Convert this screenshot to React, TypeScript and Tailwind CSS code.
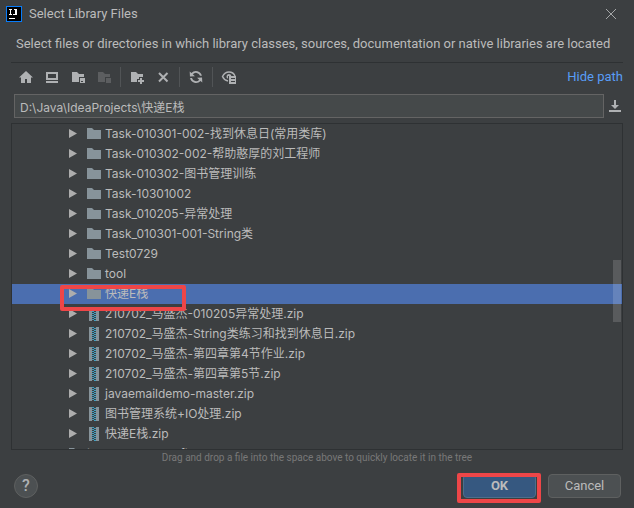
import type { ReactNode } from "react";

type Kind = "folder" | "zip";

interface Entry {
  name: string;
  kind: Kind;
  selected?: boolean;
}

const entries: Entry[] = [
  { name: "Task-010301-002-找到休息日(常用类库)", kind: "folder" },
  { name: "Task-010302-002-帮助憨厚的刘工程师", kind: "folder" },
  { name: "Task-010302-图书管理训练", kind: "folder" },
  { name: "Task-10301002", kind: "folder" },
  { name: "Task_010205-异常处理", kind: "folder" },
  { name: "Task_010301-001-String类", kind: "folder" },
  { name: "Test0729", kind: "folder" },
  { name: "tool", kind: "folder" },
  { name: "快递E栈", kind: "folder", selected: true },
  { name: "210702_马盛杰-010205异常处理.zip", kind: "zip" },
  { name: "210702_马盛杰-String类练习和找到休息日.zip", kind: "zip" },
  { name: "210702_马盛杰-第四章第4节作业.zip", kind: "zip" },
  { name: "210702_马盛杰-第四章第5节.zip", kind: "zip" },
  { name: "javaemaildemo-master.zip", kind: "zip" },
  { name: "图书管理系统+IO处理.zip", kind: "zip" },
  { name: "快递E栈.zip", kind: "zip" },
];

function FolderIcon() {
  return (
    <svg width="16" height="16" viewBox="0 0 16 16" className="shrink-0" aria-hidden="true">
      <path d="M1 2h5l2 2h7v9H1z" fill="#87939a" />
    </svg>
  );
}

function ZipIcon() {
  const teeth = [0, 1, 2, 3, 4, 5, 6];
  return (
    <svg width="16" height="16" viewBox="0 0 16 16" className="shrink-0" shapeRendering="crispEdges" aria-hidden="true">
      <path d="M3 1h3v14H3zM10 1h3v14h-3z" fill="#87939a" />
      {teeth.map((t) => (
        <g key={t} fill="#40b6e0" fillOpacity="0.8">
          <rect x="6" y={1 + t * 2} width="2" height="1" />
          <rect x="8" y={2 + t * 2} width="2" height="1" />
        </g>
      ))}
    </svg>
  );
}

function ToolButton({ label, disabled, children }: { label: string; disabled?: boolean; children: ReactNode }) {
  return (
    <button
      type="button"
      aria-label={label}
      disabled={disabled}
      className="flex h-6 w-[26px] items-center justify-center text-[#afb1b3] disabled:text-[#5c5e60]"
    >
      <svg width="16" height="16" viewBox="0 0 16 16" fill="currentColor" aria-hidden="true">
        {children}
      </svg>
    </button>
  );
}

function Separator() {
  return (
    <span className="flex w-[7px] justify-center">
      <span className="h-5 w-px bg-[#515456]" />
    </span>
  );
}

function TreeRow({ entry }: { entry: Entry }) {
  return (
    <li
      role="treeitem"
      aria-selected={!!entry.selected}
      className={`relative flex h-5 shrink-0 items-center pl-[54px] ${entry.selected ? "bg-[#4b6eaf]" : ""}`}
    >
      <button type="button" aria-label={`Expand ${entry.name}`} className="mr-1 flex h-4 w-4 items-center justify-center">
        <svg width="16" height="16" viewBox="0 0 16 16" aria-hidden="true">
          <path d="M3 3v9l8-4.500z" fill="#adadad" />
        </svg>
      </button>
      {entry.kind === "folder" ? <FolderIcon /> : <ZipIcon />}
      <span className="ml-[3px] leading-5 whitespace-nowrap">{entry.name}</span>
      {entry.selected && (
        <span className="absolute top-px left-12 z-10 h-[26px] w-[126px] rounded-xs border-4 border-[#ee4648]" />
      )}
    </li>
  );
}

export default function App() {
  return (
    <main className="flex h-screen flex-col overflow-hidden bg-[#3c3f41] font-['Roboto','Noto_Sans_CJK_SC',sans-serif] text-[13px] text-[#bbbbbb]">
      <header className="flex h-7 shrink-0 items-center pr-[15px] pl-[6px]">
        <svg width="16" height="16" viewBox="0 0 16 16" aria-hidden="true">
          <rect width="16" height="16" fill="#087cfa" />
          <rect x="1" y="1" width="14" height="14" fill="#000" />
          <path
            d="M3 3h3v1H5v4h1v1H3V8h1V4H3zM8 3h3v5l-1 1H7V8h2V4H8zM3 12h6v1H3z"
            fill="#fff"
            shapeRendering="crispEdges"
          />
        </svg>
        <h1 className="ml-[7px] flex-1">Select Library Files</h1>
        <button type="button" aria-label="Close" className="flex h-4 w-4 items-center justify-center">
          <svg width="12" height="12" viewBox="0 0 12 12" stroke="#a5a7a8" fill="none" aria-hidden="true">
            <path d="M1 1l10 10M11 1L1 11" />
          </svg>
        </button>
      </header>

      <div className="mx-[11px] flex min-h-0 flex-1 flex-col">
        <p className="h-[35px] shrink-0 border-b border-[#2e3133] pt-[6px] pl-[5px] leading-5 whitespace-nowrap">
          Select files or directories in which library classes, sources, documentation or native libraries are located
        </p>

        <div className="flex h-[31px] shrink-0 items-center pb-[3px] pl-[2px]" role="toolbar" aria-label="File actions">
          <ToolButton label="Home directory">
            <path d="M8 2L1 8.500h2V14h4v-4h2v4h4V8.500h2z" />
          </ToolButton>
          <ToolButton label="Desktop directory">
            <path fillRule="evenodd" d="M2 3h12v8H2zM4 5v4h8V5zM2 12h12v2H2z" />
          </ToolButton>
          <ToolButton label="Project directory">
            <path d="M2 3h5l2 2h5v3H9v5H2z" />
            <path fillRule="evenodd" d="M10 9h5v5h-5zM11 12v1h2v-1z" />
          </ToolButton>
          <ToolButton label="Module directory" disabled>
            <path d="M2 3h5l2 2h5v3H9v5H2z" />
            <path d="M10 9h5v5h-5z" />
          </ToolButton>
          <Separator />
          <ToolButton label="New folder">
            <path d="M2 3h5l2 2h5v3h-4v2H8v3H2z" />
            <path d="M11 9h2v2h2v2h-2v2h-2v-2H9v-2h2z" />
          </ToolButton>
          <ToolButton label="Delete">
            <path d="M4 4l8.500 8.500M12.500 4L4 12.500" stroke="currentColor" strokeWidth="2" />
          </ToolButton>
          <Separator />
          <ToolButton label="Refresh">
            <path d="M12.570 11.880A6 6 0 0 1 2.090 9.040l1.860.07a4.200 4.200 0 0 0 7.280 1.570L9.050 8.710l4.990-.26.26 4.990zM3.430 4.120A6 6 0 0 1 13.890 6.850l-1.870-.06a4.200 4.200 0 0 0-7.250-1.470l2.180 1.970-4.990.26L1.700 2.560z" />
          </ToolButton>
          <Separator />
          <ToolButton label="Show hidden files">
            <path
              d="M7 12C4.500 11.500 2.500 10 1.500 7.500 3 4.500 5 3 8 3s5 1.500 6 4"
              fill="none"
              stroke="currentColor"
              strokeWidth="1.500"
            />
            <path d="M8 5a2.500 2.500 0 0 0-1 4.800V7h3.400A2.500 2.500 0 0 0 8 5z" />
            <path fillRule="evenodd" d="M8 7h7v8H8zM10 9v1h4V9zM10 12v1h4v-1z" />
          </ToolButton>
          <a href="#path" className="ml-auto text-[#589df6]">
            Hide path
          </a>
        </div>

        <div className="mb-[5px] flex shrink-0 items-center pl-[3px]">
          <input
            type="text"
            aria-label="Path"
            defaultValue="D:\Java\IdeaProjects\快递E栈"
            className="h-6 min-w-0 flex-1 border border-[#646464] bg-[#45494a] px-[5px] font-['Inter','Noto_Sans_CJK_SC',sans-serif] text-xs text-[#bbbbbb] outline-none"
          />
          <button type="button" aria-label="Path history" className="ml-[3px] text-[#afb1b3]">
            <svg width="16" height="16" viewBox="0 0 16 16" fill="currentColor" aria-hidden="true">
              <path d="M7 2h2v5h3l-4 4-4-4h3zM2 12h12v2H2z" />
            </svg>
          </button>
        </div>

        <div className="relative min-h-0 flex-1 border border-[#2e3133]">
          <ul
            role="tree"
            aria-label="Files"
            className="flex h-full flex-col overflow-hidden font-['Inter','Noto_Sans_CJK_SC',sans-serif] text-xs"
          >
            {entries.map((entry) => (
              <TreeRow key={entry.name} entry={entry} />
            ))}
            <li role="treeitem" className="flex h-5 shrink-0 items-center pl-14">
              <FolderIcon />
              <span className="ml-[3px] leading-5">idea workspace files</span>
            </li>
          </ul>
          <div className="absolute top-[136px] right-px h-[62px] w-2 bg-white/15" />
        </div>

        <p className="h-[15px] shrink-0 text-center text-[10px] leading-[15px] text-[#787878]">
          Drag and drop a file into the space above to quickly locate it in the tree
        </p>

        <footer className="flex shrink-0 items-center pt-[9px] pr-[2px] pb-[10px] pl-[3px]">
          <button
            type="button"
            aria-label="Help"
            className="h-6 w-6 rounded-full border border-[#5e6060] bg-[#4c5052] text-base leading-5 font-medium text-[#afb1b3]"
          >
            ?
          </button>
          <div className="ml-auto flex gap-3">
            <div className="relative">
              <button
                type="button"
                className="h-6 w-[73px] rounded-sm border border-[#4c708c] bg-[#365880] leading-5 font-bold"
              >
                OK
              </button>
              <span className="absolute -top-px -left-[6px] h-[30px] w-[84px] rounded-xs border-4 border-[#ee4648]" />
            </div>
            <button type="button" className="h-6 w-[73px] rounded-sm border border-[#5e6060] bg-[#4c5052] leading-5">
              Cancel
            </button>
          </div>
        </footer>
      </div>
    </main>
  );
}
